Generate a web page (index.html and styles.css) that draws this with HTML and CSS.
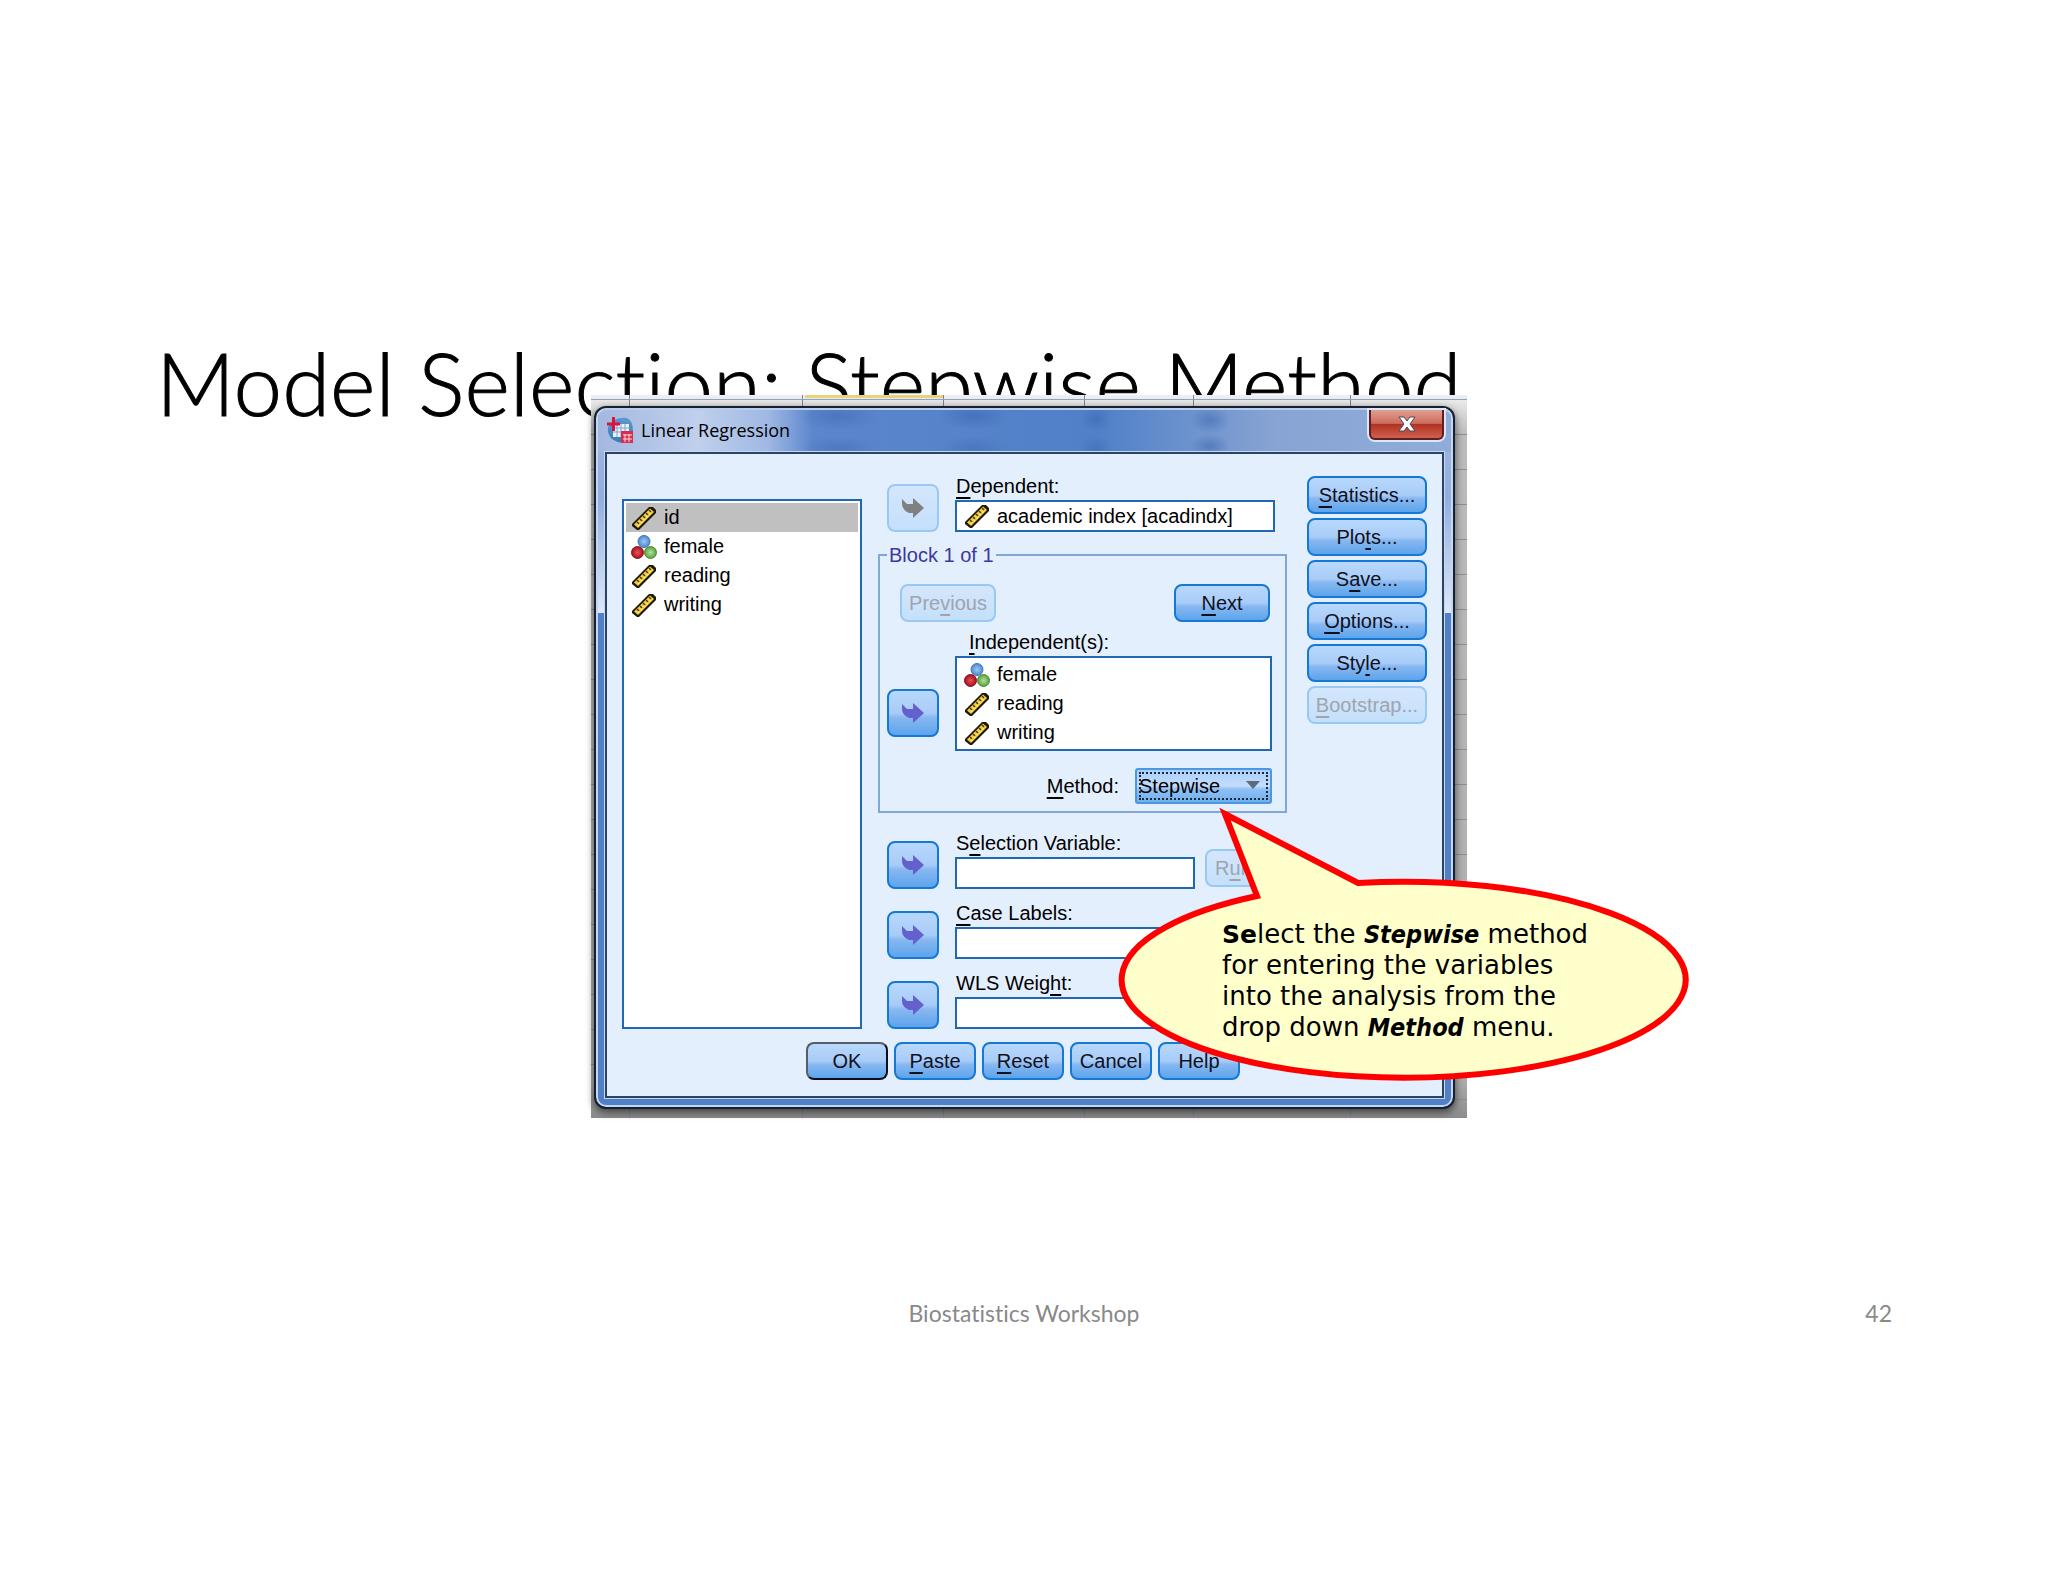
FILE: index.html
```html
<!DOCTYPE html>
<html lang="en">
<head>
  <meta charset="UTF-8" />
  <meta name="viewport" content="width=device-width, initial-scale=1" />
  <title>Model Selection: Stepwise Method</title>
  <link rel="stylesheet" href="styles.css">
</head>
<body>

  <!-- shared icons -->
  <svg class="defs" width="0" height="0" aria-hidden="true">
    <defs>
      <linearGradient id="g-app" x1="0" y1="0" x2="0" y2="1">
        <stop offset="0" stop-color="#5b9bd0"/><stop offset="1" stop-color="#3a79b8"/>
      </linearGradient>
      <radialGradient id="g-blue"><stop offset="0" stop-color="#9cc8f4"/><stop offset="1" stop-color="#4a8ad0"/></radialGradient>
      <radialGradient id="g-red"><stop offset="0" stop-color="#e8505c"/><stop offset="1" stop-color="#a80f1c"/></radialGradient>
      <radialGradient id="g-green"><stop offset="0" stop-color="#b4e09a"/><stop offset="1" stop-color="#5aa040"/></radialGradient>
    </defs>
    <symbol id="i-scale" viewBox="0 0 24 24">
      <path d="M0 18 L17 1 H21 L24 4 V7 L7 24 H5 L0 20 Z" fill="#1c1a10"/>
      <path d="M2 18.500 L18 2.500 L22 6 L6 22 Z" fill="#f4cc38"/>
      <path d="M5 16 l2 2 M8 13 l2 2 M11 10 l2 2 M14 7 l2 2 M17 4 l2 2" stroke="#4a3c08" stroke-width="1.500"/>
      <path d="M6 20 L20.500 5.500" stroke="#fbe88a" stroke-width="1.500" stroke-dasharray="2 2"/>
    </symbol>
    <symbol id="i-nominal" viewBox="0 0 26 24">
      <circle cx="13" cy="6.500" r="6" fill="url(#g-blue)" stroke="#3f78b8"/>
      <circle cx="6.500" cy="17.500" r="6" fill="url(#g-red)" stroke="#8c1420"/>
      <circle cx="19.500" cy="17.500" r="6" fill="url(#g-green)" stroke="#4a8c34"/>
    </symbol>
    <symbol id="i-move" viewBox="0 0 24 20">
      <path d="M1 1 L6 6 H12 V0 L23 10 L12 20 V15 H8 Q1 12 1 6 Z" fill="currentColor"/>
    </symbol>
  </svg>

  <main class="slide">
    <h1>Model Selection: Stepwise Method</h1>

    <div class="shot">
      <div class="window">
        <div class="titlebar">
          <svg class="app-icon" viewBox="0 0 26 26" aria-hidden="true">
            <path d="M7 3 Q13 0 20 1 Q26 4 26 14 V20 L18 26 Q9 26 4 21 Q0 16 1 10 Z" fill="url(#g-app)"/>
            <path d="M6 7 H22 V20 H6 Z" fill="#eaf2fa"/>
            <path d="M6 11 H22 M6 15 H22 M10 7 V20 M14 7 V20 M18 7 V20" stroke="#7da6cc"/>
            <path d="M0 7 H13 M6.500 0 V14" stroke="#d8143a" stroke-width="3"/>
            <path d="M14 14 H26 V26 H14 Z" fill="#d8304c"/>
            <path d="M16 18 H25 M16 22 H25 M18 17 V25 M22 17 V25" stroke="#fbd8de"/>
          </svg>
          <span class="caption">Linear Regression</span>
          <button class="close" aria-label="Close">
            <svg viewBox="0 0 18 16" aria-hidden="true">
              <path d="M1 1 H6 L9 5 L12 1 H17 L12 8 L17 15 H12 L9 11 L6 15 H1 L6 8 Z" fill="#fff" stroke="#4a4a5a"/>
            </svg>
          </button>
        </div>

        <form class="client" onsubmit="return false">
          <div class="columns">
            <ul class="list variables">
              <li class="selected"><svg><use href="#i-scale"/></svg>id</li>
              <li><svg><use href="#i-nominal"/></svg>female</li>
              <li><svg><use href="#i-scale"/></svg>reading</li>
              <li><svg><use href="#i-scale"/></svg>writing</li>
            </ul>

            <div class="middle">
              <div class="pick dependent">
                <button class="btn move" disabled aria-label="Move to Dependent"><svg><use href="#i-move"/></svg></button>
                <div class="field">
                  <label for="dependent"><u>D</u>ependent:</label>
                  <div class="entry">
                    <svg><use href="#i-scale"/></svg>
                    <input id="dependent" type="text" value="academic index [acadindx]">
                  </div>
                </div>
              </div>

              <fieldset>
                <legend>Block 1 of 1</legend>
                <div class="pager">
                  <button class="btn" disabled>Pre<u>v</u>ious</button>
                  <button class="btn"><u>N</u>ext</button>
                </div>
                <p class="list-label" id="indep"><u>I</u>ndependent(s):</p>
                <div class="pick block">
                  <button class="btn move" aria-label="Move to Independent(s)"><svg><use href="#i-move"/></svg></button>
                  <ul class="list" aria-labelledby="indep">
                    <li><svg><use href="#i-nominal"/></svg>female</li>
                    <li><svg><use href="#i-scale"/></svg>reading</li>
                    <li><svg><use href="#i-scale"/></svg>writing</li>
                  </ul>
                </div>
                <div class="method">
                  <label for="method"><u>M</u>ethod:</label>
                  <div class="dropdown">
                    <select id="method">
                      <option>Stepwise</option>
                      <option>Enter</option>
                      <option>Remove</option>
                      <option>Backward</option>
                      <option>Forward</option>
                    </select>
                  </div>
                </div>
              </fieldset>

              <div class="picks">
                <div class="pick">
                  <button class="btn move" aria-label="Move to Selection Variable"><svg><use href="#i-move"/></svg></button>
                  <div class="field">
                    <label for="selection">S<u>e</u>lection Variable:</label>
                    <input id="selection" type="text">
                  </div>
                  <button class="btn rule" disabled>R<u>u</u>le...</button>
                </div>
                <div class="pick">
                  <button class="btn move" aria-label="Move to Case Labels"><svg><use href="#i-move"/></svg></button>
                  <div class="field">
                    <label for="case"><u>C</u>ase Labels:</label>
                    <input id="case" type="text">
                  </div>
                </div>
                <div class="pick">
                  <button class="btn move" aria-label="Move to WLS Weight"><svg><use href="#i-move"/></svg></button>
                  <div class="field">
                    <label for="wls">WLS Weig<u>h</u>t:</label>
                    <input id="wls" type="text">
                  </div>
                </div>
              </div>
            </div>

            <div class="side">
              <button class="btn"><u>S</u>tatistics...</button>
              <button class="btn">Plo<u>t</u>s...</button>
              <button class="btn">S<u>a</u>ve...</button>
              <button class="btn"><u>O</u>ptions...</button>
              <button class="btn">Sty<u>l</u>e...</button>
              <button class="btn" disabled><u>B</u>ootstrap...</button>
            </div>
          </div>

          <div class="actions">
            <button class="btn ok">OK</button>
            <button class="btn"><u>P</u>aste</button>
            <button class="btn"><u>R</u>eset</button>
            <button class="btn">Cancel</button>
            <button class="btn">Help</button>
          </div>
        </form>
      </div>

      <aside class="callout">
        <svg viewBox="0 0 576 276" aria-hidden="true">
          <path d="M5 5 L138 74 A282 98 0 1 1 37 87 Z" fill="#ffffcc" stroke="#ff0000" stroke-width="6"/>
        </svg>
        <p><b>Se</b>lect the <b><i>Stepwise</i></b> method<br>for entering the variables<br>into the analysis from the<br>drop down <b><i>Method</i></b> menu.</p>
      </aside>
    </div>

    <footer>
      <span></span>
      <span>Biostatistics Workshop</span>
      <span class="page">42</span>
    </footer>
  </main>

</body>
</html>
```

FILE: styles.css
```css
* { margin:0; padding:0; box-sizing:border-box; }
body { background:#fff; color:#000; font-family:"Liberation Sans", Arial, sans-serif; font-size:20px; }
.defs { display:block; position:absolute; }
.slide { padding:331px 156px 0; }

h1 { font-family:Lato, sans-serif; font-weight:300; font-size:87px; line-height:104px; white-space:nowrap; font-variant-ligatures:none; -webkit-text-stroke:1px #000; }

/* spreadsheet behind the dialog */
.shot {
  position:relative; max-width:876px; height:723px; margin:-40px auto 0; left:5px; padding:11px 12px 9px 3px;
  background:
    linear-gradient(#e8d27c, #e8d27c) 214px 0/138px 3px no-repeat,
    linear-gradient(#8ca4c4, #8ca4c4) 0 4px/100% 1px no-repeat,
    linear-gradient(#7c8494, #7c8494) 38px 0/1px 100% no-repeat,
    linear-gradient(#7c8494, #7c8494) 211px 0/1px 100% no-repeat,
    linear-gradient(#7c8494, #7c8494) 352px 0/1px 100% no-repeat,
    linear-gradient(#7c8494, #7c8494) 493px 0/1px 100% no-repeat,
    linear-gradient(#7c8494, #7c8494) 602px 0/1px 100% no-repeat,
    linear-gradient(#7c8494, #7c8494) 759px 0/1px 100% no-repeat,
    repeating-linear-gradient(transparent 0 34px, #8890a0 34px 35px) 0 5px no-repeat,
    linear-gradient(#f0f0f0, #bcbcbc 40px, #acacac 95%, #8c8c8c);
}

.window {
  display:flex; flex-direction:column; height:100%; padding:0 9px 9px; border:2px solid #16202e; border-radius:12px;
  background:
    linear-gradient(#a4b8de, #92aee0 90px, #dde8f8 205px, transparent 205px),
    #5280c8;
  box-shadow:inset 0 0 0 2px #c4d8f4, 0 3px 8px rgba(0,0,0,0.6);
}
.titlebar {
  display:flex; align-items:center; height:44px; margin:0 -7px; padding:0 4px 2px 3px; border-top:2px solid #b8ccec; border-radius:10px 10px 0 0;
  background:
    radial-gradient(closest-side, rgba(40,84,160,0.3), transparent) 200px -8px/80px 28px no-repeat,
    radial-gradient(closest-side, rgba(40,84,160,0.25), transparent) 200px 26px/80px 24px no-repeat,
    radial-gradient(closest-side, rgba(40,84,160,0.35), transparent) 340px -8px/70px 28px no-repeat,
    radial-gradient(closest-side, rgba(40,84,160,0.25), transparent) 340px 26px/70px 24px no-repeat,
    radial-gradient(closest-side, rgba(40,84,160,0.3), transparent) 482px -4px/32px 26px no-repeat,
    radial-gradient(closest-side, rgba(40,84,160,0.25), transparent) 482px 26px/32px 24px no-repeat,
    radial-gradient(closest-side, rgba(40,84,160,0.4), transparent) 592px -4px/40px 28px no-repeat,
    radial-gradient(closest-side, rgba(40,84,160,0.4), transparent) 592px 24px/40px 24px no-repeat,
    linear-gradient(90deg, #a4b8e0 0, #c0d0ec 100px, #a0b8e4 170px, #5c86cc 215px, #5080c8 500px, #88a4d4 680px, #90acd8);
}
.app-icon { width:26px; height:26px; margin-left:6px; }
.caption { margin-left:8px; font-family:"Open Sans", sans-serif; font-size:18px; }
.close {
  align-self:flex-start; width:75px; height:30px; margin-left:auto; margin-right:3px; border:2px solid #5c2020; border-top:0; border-radius:0 0 6px 6px;
  background:linear-gradient(#e0a090, #cc6c5c 48%, #b03020 50%, #d06050); box-shadow:0 0 0 2px #dce6f6;
}
.close svg { display:block; width:18px; height:16px; margin:0 auto; }

.client { flex:1; display:flex; flex-direction:column; padding:21px 15px 13px; background:#e4effd; border:2px solid #2c4464; box-shadow:0 0 0 1px #c4d8f4; }
.columns { display:flex; align-items:flex-start; }

.list { list-style:none; background:#fff; border:2px solid #2068b4; padding:2px; }
.list li { display:flex; align-items:center; gap:7px; height:29px; padding-left:5px; }
.list svg { width:26px; height:24px; }
.list li.selected { background:#c0c0c0; }
.variables { width:240px; height:530px; margin-top:24px; }

.btn {
  height:38px; font-family:inherit; font-size:20px; color:#10101c; border:2px solid #1478d4; border-radius:8px;
  background:linear-gradient(#b8d8fc, #a8ccf8 50%, #88b8f0 60%, #5ca4ec);
}
.btn:disabled { color:#a0a4ac; border-color:#98c8f4; background:linear-gradient(#d4e6fc, #c4e0fc); }
.btn u, label u, .list-label u { text-underline-offset:4px; text-decoration-thickness:2px; text-decoration-skip-ink:none; }
.move { width:52px; height:48px; color:#6460cc; }
.move svg { width:24px; height:20px; display:block; margin:0 auto; }
.move:disabled { color:#808080; }

.middle { flex:1; margin-left:16px; }
.pick { display:flex; align-items:flex-end; gap:16px; padding-left:9px; }
.field { width:240px; }
.field label { display:block; height:25px; padding-left:1px; line-height:22px; white-space:nowrap; }
.field input, .entry { display:block; width:100%; height:32px; border:2px solid #2068b4; background:#fff; font:inherit; }
.dependent .field { width:320px; }
.entry { display:flex; align-items:center; gap:8px; padding-left:8px; }
.entry svg { width:24px; height:24px; }
.entry input { flex:1; width:auto; height:28px; border:0; }

fieldset { height:270px; margin:11px 20px 0 0; padding:17px 13px 0 7px; border:2px solid #80a8d4; }
legend { height:24px; padding:0 2px; color:#3c389c; line-height:24px; }
.pager { display:flex; justify-content:space-between; padding:0 2px 0 13px; }
.pager .btn { width:96px; }
.list-label { height:34px; padding-left:82px; line-height:40px; }
.block { padding-left:0; }
.block .move { margin-bottom:14px; }
.block .list { flex:1; height:95px; }
.method { display:flex; justify-content:flex-end; align-items:center; gap:16px; margin-top:17px; }
.dropdown { position:relative; }
select {
  display:block; appearance:none; width:137px; height:36px; padding-left:2px; font:inherit; border:2px solid #4c98e0; border-radius:3px;
  background:linear-gradient(#a8d0fc, #c4dcfc 50%, #90c0f4 60%, #70b0f0); outline:2px dotted #202838; outline-offset:-6px;
}
.dropdown::after { content:""; position:absolute; right:12px; top:13px; border:7px solid transparent; border-top:8px solid #5c6c7c; border-bottom:0; }

.picks { display:flex; flex-direction:column; gap:13px; margin-top:19px; }
.rule { width:78px; margin:0 0 2px -6px; }

.side { display:flex; flex-direction:column; gap:4px; width:120px; margin-top:1px; }

.actions { display:flex; gap:6px; margin:13px 0 0 184px; }
.actions .btn { width:82px; }
.actions .ok { border-color:#585c64 #0c1018 #0c1018 #585c64; }

/* speech bubble over the dialog */
.callout { position:absolute; left:629px; top:414px; width:576px; height:276px; }
.callout svg { display:block; width:576px; height:276px; overflow:visible; }
.callout p { position:absolute; left:2px; top:110px; font:26px/31px "DejaVu Sans", Verdana, sans-serif; white-space:nowrap; }
.callout b { font-size:25px; }
.callout i { font-family:"DejaVu Sans Condensed", "DejaVu Sans", sans-serif; }

footer { display:grid; grid-template-columns:1fr auto 1fr; margin-top:179px; color:#898989; font-family:Lato, sans-serif; font-size:23px; line-height:32px; font-variant-ligatures:none; }
.page { text-align:right; }
```
